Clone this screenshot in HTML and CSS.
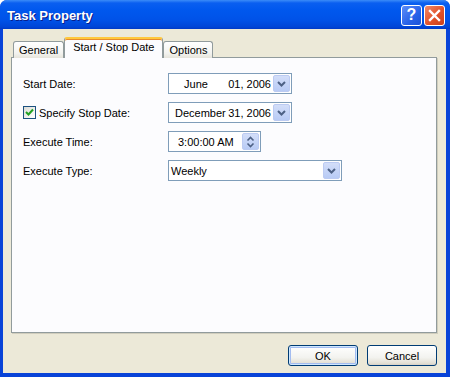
FILE: index.html
```html
<!DOCTYPE html>
<html lang="en">
<head>
  <meta charset="UTF-8" />
  <title>Task Property</title>
  <link rel="stylesheet" href="styles.css">
</head>
<body>
  <div class="window">
    <div class="titlebar">
      <span class="title">Task Property</span>
      <div class="caption-buttons">
        <span class="cap-btn help">?</span>
        <span class="cap-btn close">
          <svg width="13" height="13" viewBox="0 0 13 13"><path d="M2 2 L11 11 M11 2 L2 11" stroke="#fff" stroke-width="2.4" stroke-linecap="square"/></svg>
        </span>
      </div>
    </div>

    <div class="client">
      <div class="tabs">
        <span class="tab">General</span>
        <span class="tab selected">Start / Stop Date</span>
        <span class="tab">Options</span>
      </div>

      <div class="panel">
        <div class="form">
          <span class="label">Start Date:</span>
          <div class="field date">
            <span class="month">June</span>
            <span class="day">01, 2006</span>
            <span class="drop"><svg width="9" height="6" viewBox="0 0 9 6"><path d="M1 1 L4.5 4.5 L8 1" stroke="#4d6185" stroke-width="2" fill="none"/></svg></span>
          </div>

          <label class="label check">
            <span class="box"><svg width="11" height="11" viewBox="0 0 11 11"><path d="M2 5 L4.5 7.5 L9 2.5" stroke="#21a121" stroke-width="2" fill="none"/></svg></span>
            Specify Stop Date:
          </label>
          <div class="field date">
            <span class="month long">December</span>
            <span class="day">31, 2006</span>
            <span class="drop"><svg width="9" height="6" viewBox="0 0 9 6"><path d="M1 1 L4.5 4.5 L8 1" stroke="#4d6185" stroke-width="2" fill="none"/></svg></span>
          </div>

          <span class="label">Execute Time:</span>
          <div class="field time">
            <span class="time-text">3:00:00 AM</span>
            <span class="spin"><svg width="9" height="12" viewBox="0 0 9 12"><path d="M1.5 4.5 L4.5 1.5 L7.5 4.5 M1.5 7.5 L4.5 10.5 L7.5 7.5" stroke="#4d6185" stroke-width="1.6" fill="none"/></svg></span>
          </div>

          <span class="label">Execute Type:</span>
          <div class="field combo">
            <span class="combo-text">Weekly</span>
            <span class="drop"><svg width="9" height="6" viewBox="0 0 9 6"><path d="M1 1 L4.5 4.5 L8 1" stroke="#4d6185" stroke-width="2" fill="none"/></svg></span>
          </div>
        </div>
      </div>

      <div class="actions">
        <button class="btn default">OK</button>
        <button class="btn">Cancel</button>
      </div>
    </div>
  </div>
</body>
</html>
```

FILE: styles.css
```css
body {
  margin: 0;
  font-family: "Liberation Sans", Arial, sans-serif;
  font-size: 11px;
  color: #000;
}
.window {
  width: 450px;
  height: 377px;
  box-sizing: border-box;
  display: flex;
  flex-direction: column;
  background: #0843d8;
  border-radius: 7px 7px 0 0;
  overflow: hidden;
}
.titlebar {
  height: 29px;
  flex: none;
  display: flex;
  align-items: center;
  justify-content: space-between;
  padding: 0 5px 0 7px;
  background: linear-gradient(#3b8cf8 0, #0a5ff0 3px, #0058ee 10px, #0052e8 20px, #0045d6 27px, #0039c6 29px);
}
.title {
  color: #fff;
  font-weight: bold;
  font-size: 13px;
  text-shadow: 1px 1px 0 #0a1e8a;
  padding-top: 2px;
}
.caption-buttons {
  display: flex;
  gap: 2px;
  padding-top: 1px;
}
.cap-btn {
  width: 19px;
  height: 19px;
  border: 1px solid #fff;
  border-radius: 3px;
  display: flex;
  align-items: center;
  justify-content: center;
  color: #fff;
  font-weight: bold;
  font-size: 16px;
}
.help {
  background: linear-gradient(135deg, #5d8ef9, #2862e8 60%, #1c52d8);
}
.close {
  background: linear-gradient(135deg, #f08a6a, #e2522a 55%, #c8401c);
}
.client {
  flex: 1;
  margin: 0 4px 4px 3px;
  background: #ece9d8;
  padding: 8px 9px 0 8px;
  display: flex;
  flex-direction: column;
}
.tabs {
  display: flex;
  align-items: flex-end;
  padding-left: 2px;
  height: 21px;
  position: relative;
  z-index: 1;
  margin-bottom: -1px;
}
.tab {
  height: 16px;
  padding: 0 5px;
  line-height: 17px;
  border: 1px solid #919b9c;
  border-bottom: none;
  border-radius: 3px 3px 0 0;
  background: linear-gradient(#fff, #f3f3ef 70%, #e6e4db);
}
.tab.selected {
  height: 19px;
  padding: 0 8px;
  line-height: 16px;
  background: #fcfcfe;
  border-top: 2px solid #ffc83c;
  box-shadow: inset 0 1px 0 #e68b2c;
}
.panel {
  height: 274px;
  border: 1px solid #919b9c;
  background: #fcfcfe;
  box-shadow: 1px 1px 0 #d0cdbd;
}
.form {
  display: grid;
  grid-template-columns: 145px auto;
  grid-auto-rows: 21px;
  row-gap: 8px;
  padding: 15px 11px 0 11px;
  align-items: center;
  justify-items: start;
}
.label {
  display: flex;
  align-items: center;
  gap: 3px;
}
.box {
  width: 11px;
  height: 11px;
  border: 1px solid #1c5180;
  background: linear-gradient(135deg, #dcdcd6, #fff);
  display: flex;
}
.field {
  height: 19px;
  border: 1px solid #7f9db9;
  background: #fff;
  display: flex;
  align-items: center;
}
.date {
  width: 122px;
}
.month {
  width: 48px;
  text-align: center;
  padding-left: 3px;
}
.month.long {
  width: 50px;
  padding-left: 6px;
  text-align: left;
}
.day {
  margin-left: auto;
  margin-right: 2px;
}
.drop, .spin {
  width: 15px;
  height: 15px;
  margin-right: 1px;
  border: 1px solid #bccbf2;
  border-radius: 2px;
  background: linear-gradient(#d3def9, #b8cbf5);
  display: flex;
  align-items: center;
  justify-content: center;
}
.time {
  width: 91px;
}
.time-text {
  padding-left: 9px;
}
.spin {
  margin-left: auto;
  margin-right: 1px;
}
.combo {
  width: 172px;
}
.combo-text {
  padding-left: 2px;
}
.combo .drop {
  margin-left: auto;
}
.actions {
  display: flex;
  justify-content: flex-end;
  gap: 9px;
  margin-top: 12px;
}
.btn {
  width: 70px;
  height: 21px;
  border: 1px solid #003c74;
  border-radius: 3px;
  background: linear-gradient(#fff, #f3f3ef 60%, #e3e0d5 90%, #d6d0c5);
  font-family: "Liberation Sans", Arial, sans-serif;
  font-size: 11px;
  color: #000;
  padding: 0;
}
.btn.default {
  box-shadow: inset 0 0 0 1px #cee7ff, inset 0 0 0 2px #a3bcf0;
}
```
